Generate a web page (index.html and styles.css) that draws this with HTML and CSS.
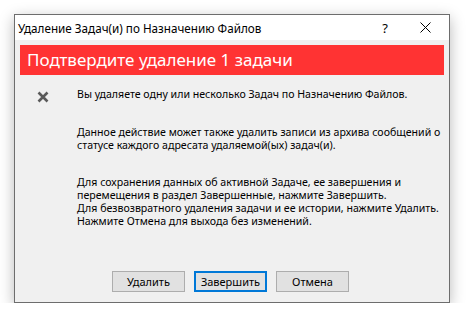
FILE: index.html
```html
<!DOCTYPE html>
<html lang="ru">
<head>
  <meta charset="UTF-8">
  <title>Удаление Задач(и) по Назначению Файлов</title>
  <link rel="stylesheet" href="styles.css">
</head>
<body>
  <div class="okno">
    <div class="zagolovok">
      <span class="nazvanie">Удаление Задач(и) по Назначению Файлов</span>
      <span class="knopka-help">?</span>
      <span class="knopka-close">
        <svg width="11" height="11" viewBox="0 0 11 11"><path d="M0.5 0.5 L10.5 10.5 M10.5 0.5 L0.5 10.5" stroke="#000" stroke-width="1"/></svg>
      </span>
    </div>
    <div class="telo">
      <div class="banner">Подтвердите удаление 1 задачи</div>
      <div class="soobshenie">
        <div class="ikonka">
          <svg width="12" height="12" viewBox="0 0 12 12"><path d="M1.5 1.5 L10.5 10.5 M10.5 1.5 L1.5 10.5" stroke="#5a5a5a" stroke-width="2.6"/></svg>
        </div>
        <div class="tekst">
          <p>Вы удаляете одну или несколько Задач по Назначению Файлов.</p>
          <p>Данное действие может также удалить записи из архива сообщений о<br>статусе каждого адресата удаляемой(ых) задач(и).</p>
          <p>Для сохранения данных об активной Задаче, ее завершения и<br>перемещения в раздел Завершенные, нажмите Завершить.<br>Для безвозвратного удаления задачи и ее истории, нажмите Удалить.<br>Нажмите Отмена для выхода без изменений.</p>
        </div>
      </div>
      <div class="knopki">
        <button>Удалить</button>
        <button class="fokus">Завершить</button>
        <button>Отмена</button>
      </div>
    </div>
  </div>
</body>
</html>
```

FILE: styles.css
```css
* { box-sizing: border-box; margin: 0; padding: 0; }
body { background: #fff; padding: 14px 0 0 14px; font-family: "Noto Sans", "Open Sans", sans-serif; font-size: 10.6px; color: #000; }
.okno { width: 436px; height: 289px; border: 1px solid #6d6d6d; background: #f0f0f0; display: flex; flex-direction: column; box-shadow: 0 4px 14px rgba(0,0,0,0.28); }
.zagolovok { height: 25px; background: #fff; display: flex; align-items: center; padding-left: 3px; font-size: 11.7px; }
.nazvanie { flex: 1; }
.knopka-help { width: 20px; text-align: center; font-size: 13px; margin-right: 25px; }
.knopka-close { width: 11px; height: 11px; margin-right: 18px; display: flex; }
.telo { flex: 1; display: flex; flex-direction: column; padding: 5px 5px 0 5px; }
.banner { height: 30px; background: #ff3333; color: #fff; font-size: 17px; line-height: 30px; padding-left: 7px; }
.soobshenie { display: flex; padding-top: 13px; flex: 1; }
.ikonka { width: 57px; padding-left: 17px; padding-top: 3px; }
.tekst { flex: 1; line-height: 13px; white-space: nowrap; }
.tekst p { margin-bottom: 24px; }
.tekst p:first-child { margin-bottom: 25px; }
.knopki { display: flex; justify-content: center; gap: 9px; padding-bottom: 10px; padding-right: 3px; }
.knopki button { width: 73px; height: 21px; background: #e1e1e1; border: 1px solid #adadad; font-family: inherit; font-size: 11px; color: #000; }
.knopki button.fokus { border: 2px solid #0078d7; }
```
